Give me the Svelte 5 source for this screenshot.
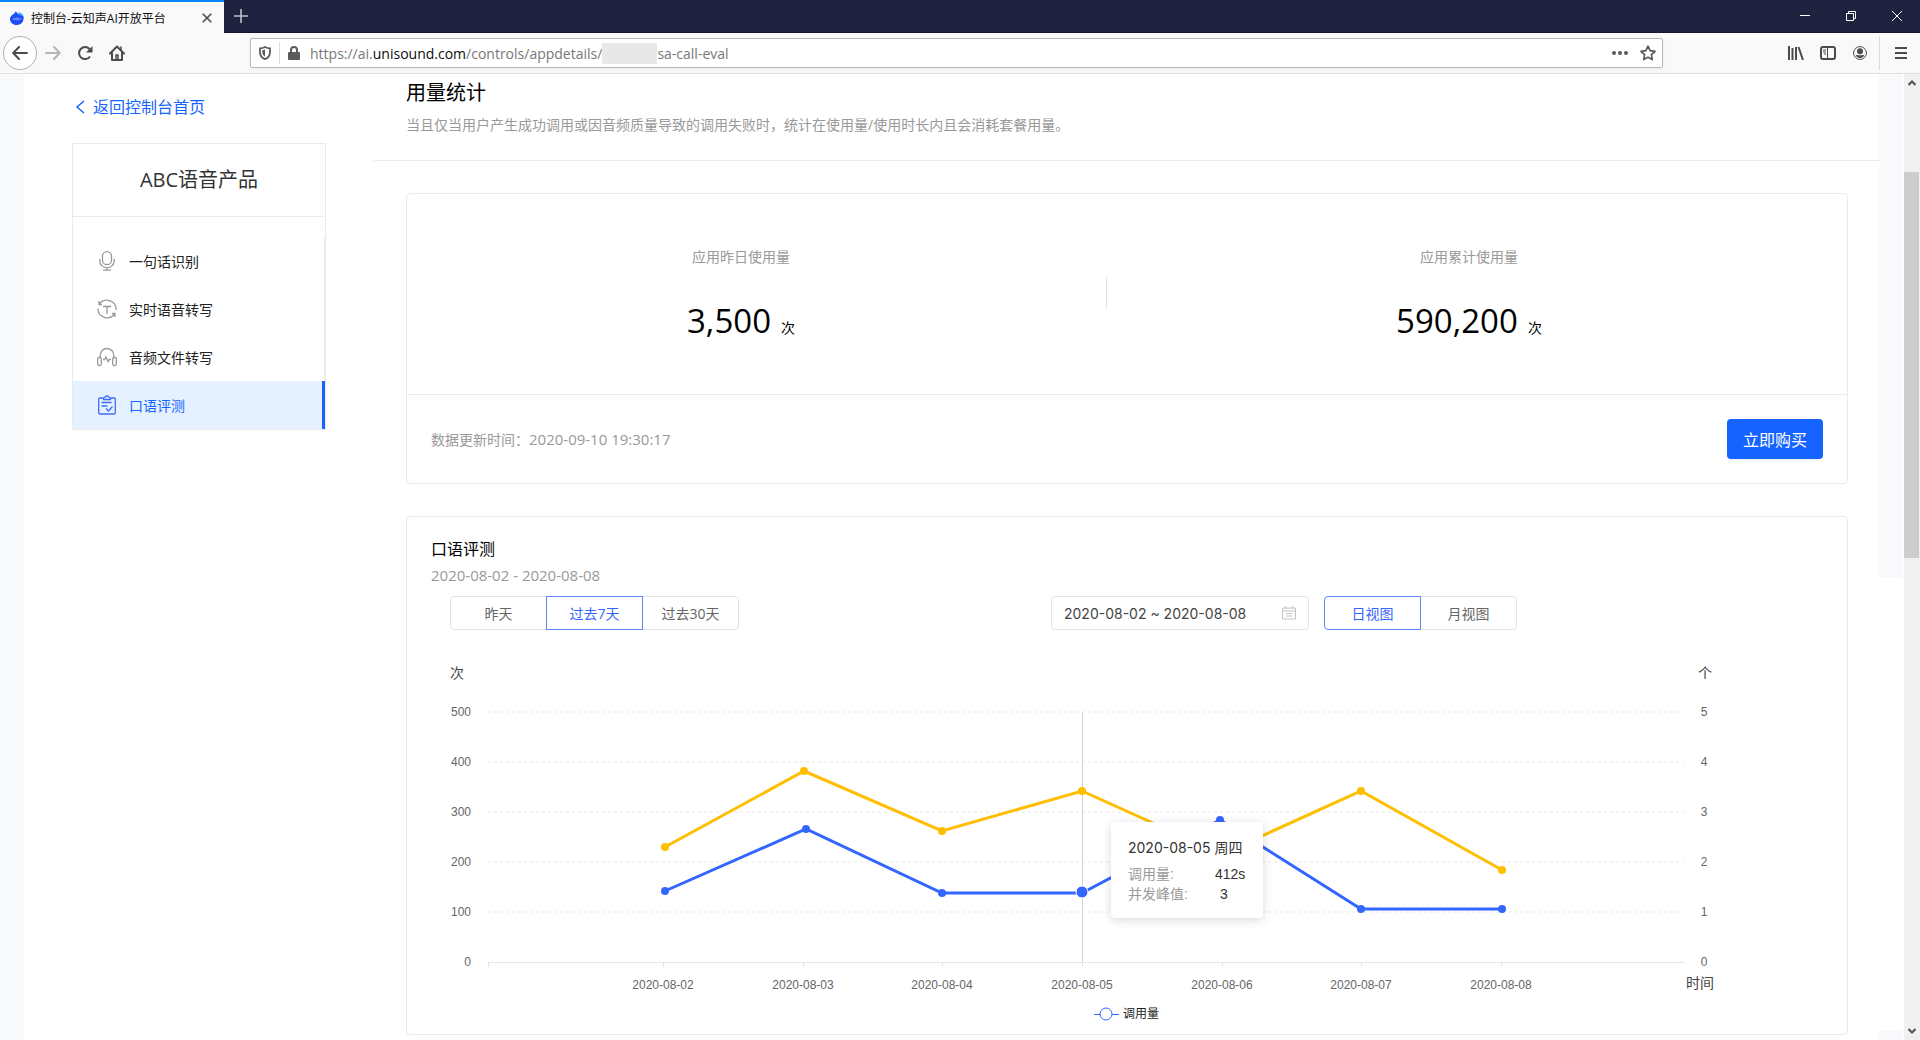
<script lang="ts">
    const menu = [
        { label: '一句话识别', icon: 'mic' },
        { label: '实时语音转写', icon: 'realtime' },
        { label: '音频文件转写', icon: 'audio' },
        { label: '口语评测', icon: 'eval' },
    ];
    let current = $state('口语评测');

    const stats = [
        { label: '应用昨日使用量', value: '3,500' },
        { label: '应用累计使用量', value: '590,200' },
    ];

    const ranges = ['昨天', '过去7天', '过去30天'];
    let range = $state('过去7天');
    const views = ['日视图', '月视图'];
    let view = $state('日视图');
    let period = $state('2020-08-02 ~ 2020-08-08');

    // chart geometry, in viewBox units
    const top = 49;
    const bottom = 299;
    const left = 38;
    const right = 1234;
    const rows = [5, 4, 3, 2, 1, 0];
    const rowY = (n: number) => bottom - n * 50;

    const days = [
        { date: '2020-08-02', x: 213 },
        { date: '2020-08-03', x: 353 },
        { date: '2020-08-04', x: 492 },
        { date: '2020-08-05', x: 632 },
        { date: '2020-08-06', x: 772 },
        { date: '2020-08-07', x: 911 },
        { date: '2020-08-08', x: 1051 },
    ];
    const calls = [[215, 228], [356, 166], [492, 230], [632, 230], [770, 157], [911, 246], [1052, 246]];
    const peaks = [[215, 184], [354, 108], [492, 168], [632, 128], [772, 191], [911, 128], [1052, 207]];
    const line = (pts: number[][]) => pts.map((p) => p.join(',')).join(' ');
</script>

<div class="window">
    <div class="tabbar">
        <div class="tab">
            <svg class="favicon" width="14" height="14" viewBox="0 0 14 14">
                <path d="M6 0C6 2 9 2.500 9 4c1-.8 2-1 3-.4C14 5 14 8 13 10c-1 2.500-3.500 4-6.500 4C3 14 0 11.500 0 8c0-4 4-4 6-8z" fill="#1f4df5" />
                <path d="M8 1.500c3-.5 5.500 2 5.500 5-1-2-3-2-4.500-2.500z" fill="#2fa4ff" />
                <path d="M3 8h1M5 7v2M7 6.500v3M9 7v2M10.500 8h1" stroke="#9fc4ff" stroke-width="1" />
            </svg>
            <span class="tab-title">控制台-云知声AI开放平台</span>
            <button class="icon-btn" aria-label="Close tab">
                <svg width="10" height="10" viewBox="0 0 10 10"><path d="M.7.7l8.600 8.600M9.300.7L.7 9.300" stroke="#4a4a4f" stroke-width="1.600" /></svg>
            </button>
        </div>
        <button class="icon-btn new-tab" aria-label="New tab">
            <svg width="14" height="14" viewBox="0 0 14 14"><path d="M7 0v14M0 7h14" stroke="#bfc0cc" stroke-width="1.600" /></svg>
        </button>
        <div class="win-controls">
            <button class="icon-btn" aria-label="Minimize">
                <svg width="10" height="10" viewBox="0 0 10 10"><path d="M0 4.500h10" stroke="#fff" /></svg>
            </button>
            <button class="icon-btn" aria-label="Restore">
                <svg width="10" height="10" viewBox="0 0 10 10" fill="none" stroke="#fff"><path d="M.5 2.500h7v7h-7zM2.500 2.500v-2h7v7h-2" /></svg>
            </button>
            <button class="icon-btn" aria-label="Close">
                <svg width="10" height="10" viewBox="0 0 10 10"><path d="M0 0l10 10M10 0L0 10" stroke="#fff" /></svg>
            </button>
        </div>
    </div>

    <div class="toolbar">
        <div class="nav-buttons">
            <button class="icon-btn back" aria-label="Back">
                <svg width="16" height="14" viewBox="0 0 16 14" fill="none" stroke="#4a4a4f" stroke-width="2" stroke-linecap="round" stroke-linejoin="round"><path d="M15 7H1.500M7 1L1.200 7 7 13" /></svg>
            </button>
            <button class="icon-btn" aria-label="Forward">
                <svg width="16" height="14" viewBox="0 0 16 14" fill="none" stroke="#b5b5b8" stroke-width="2" stroke-linecap="round" stroke-linejoin="round"><path d="M1 7h13.500M9 1l5.800 6L9 13" /></svg>
            </button>
            <button class="icon-btn" aria-label="Reload">
                <svg width="16" height="16" viewBox="0 0 16 16"><path d="M13 11.500A6 6 0 1 1 12.500 4" fill="none" stroke="#4a4a4f" stroke-width="2" /><path d="M15.500 1v6.500H9z" fill="#4a4a4f" /></svg>
            </button>
            <button class="icon-btn" aria-label="Home">
                <svg width="16" height="16" viewBox="0 0 16 16" fill="none" stroke="#4a4a4f" stroke-width="2" stroke-linejoin="round" stroke-linecap="round"><path d="M1 8.500L8 1.500l7 7M3 8v7h10V8" /><path d="M7 14V10h2v4M12 2v3" stroke-width="1.500" /></svg>
            </button>
        </div>
        <div class="urlbar">
            <svg width="12" height="14" viewBox="0 0 12 14"><path d="M1 2.300C3 2.300 4.600 1.800 6 1c1.400.8 3 1.300 5 1.300V6c0 3.500-2 6-5 7.200C3 12 1 9.500 1 6z" fill="none" stroke="#5b5b5f" stroke-width="1.800" /><path d="M6 3.600v7C4.300 9.600 3.300 8 3.300 6V4.300z" fill="#5b5b5f" /></svg>
            <span class="url-sep"></span>
            <svg width="12" height="14" viewBox="0 0 12 14"><path d="M3 7V4a3 3 0 0 1 6 0v3" fill="none" stroke="#5b5b5f" stroke-width="2" /><rect y="6" width="12" height="8" rx="1" fill="#5b5b5f" /></svg>
            <div class="url" role="textbox" tabindex="0" aria-label="Address" contenteditable="true" spellcheck="false">https://ai.<b>unisound.com</b>/controls/appdetails/<span class="mask"></span>sa-call-eval</div>
            <button class="icon-btn" aria-label="Page actions">
                <svg width="16" height="4" viewBox="0 0 16 4" fill="#5b5b5f"><circle cx="2" cy="2" r="2" /><circle cx="8" cy="2" r="2" /><circle cx="14" cy="2" r="2" /></svg>
            </button>
            <button class="icon-btn" aria-label="Bookmark">
                <svg width="16" height="16" viewBox="0 0 16 16"><path d="M8 1.200l2.100 4.500 4.900.6-3.600 3.400.9 4.900L8 12.200l-4.300 2.400.9-4.900L1 6.300l4.900-.6z" fill="none" stroke="#5b5b5f" stroke-width="1.700" stroke-linejoin="round" /></svg>
            </button>
        </div>
        <div class="tools">
            <button class="icon-btn" aria-label="Library">
                <svg width="16" height="14" viewBox="0 0 16 14" stroke="#4a4a4f" stroke-width="2"><path d="M1 0v14M4.500 2v12M8 1v13M10.500 1l4.500 13" /></svg>
            </button>
            <button class="icon-btn" aria-label="Sidebars">
                <svg width="16" height="14" viewBox="0 0 16 14" fill="none" stroke="#4a4a4f"><rect x="1" y="1" width="14" height="12" rx="2" stroke-width="2" /><path d="M7.500 1v12M3 4h3M3 6h3M4 8h2" stroke-width="1" /></svg>
            </button>
            <button class="icon-btn" aria-label="Account">
                <svg width="14" height="14" viewBox="0 0 14 14"><circle cx="7" cy="7" r="6.400" fill="none" stroke="#4a4a4f" /><circle cx="7" cy="5.200" r="3" fill="#4a4a4f" /><path d="M2.800 9.200c1.500-.6 2.500.1 4.200.1s2.700-.7 4.200-.1C10.500 11 9 12 7 12s-3.500-1-4.200-2.800z" fill="#4a4a4f" /></svg>
            </button>
            <button class="icon-btn menu-btn" aria-label="Menu">
                <svg width="12" height="12" viewBox="0 0 12 12"><path d="M0 1h12M0 6h12M0 11h12" stroke="#4a4a4f" stroke-width="2" /></svg>
            </button>
        </div>
    </div>

    <div class="viewport">
        <div class="gutter"></div>

        <aside>
            <a class="home" href="#home">
                <svg width="10" height="14" viewBox="0 0 10 14"><path d="M9 1L2 7l7 6" fill="none" stroke="#1664ff" stroke-width="1.500" /></svg>
                返回控制台首页
            </a>
            <nav>
                <h2>ABC语音产品</h2>
                <ul>
                    {#each menu as item}
                        <li>
                            <button class="menu-item" class:active={current === item.label} onclick={() => (current = item.label)}>
                                <svg width="20" height="20" viewBox="0 0 20 20" fill="none" stroke="currentColor" stroke-width="1.300">
                                    {#if item.icon === 'mic'}
                                        <rect x="5.500" y=".7" width="9" height="13" rx="4.500" />
                                        <path d="M2.700 8v1.500a7.300 7.300 0 0 0 14.600 0V8M10 16.500v2.500M6 19.200h8" />
                                    {:else if item.icon === 'realtime'}
                                        <path d="M2.500 5a9.200 9.200 0 0 1 16.600 6M17.500 15A9.200 9.200 0 0 1 .9 9.500M2 2v3.500h3M18 18v-3.500h-3M6 7.500h8M10 7.500V15" />
                                    {:else if item.icon === 'audio'}
                                        <rect x=".7" y="10.500" width="3.600" height="8" rx="1.500" />
                                        <rect x="15.700" y="10.500" width="3.600" height="8" rx="1.500" />
                                        <path d="M3.200 10.500V8.500a6.800 7 0 0 1 13.600 0v2M6 12.500h1.500l1.500-2.500 2 4.500 1.200-2H14" />
                                    {:else}
                                        <path d="M6.500 3H3a1.300 1.300 0 0 0-1.300 1.300v13.400A1.300 1.300 0 0 0 3 19h14a1.300 1.300 0 0 0 1.300-1.300V4.300A1.300 1.300 0 0 0 17 3h-3.500M6.500 4.500h7V3c-1.500 0-1.500-2-3.500-2S8 3 6.500 3zM4.500 7.500h10M4.500 11h6M9 13.500l2.500 2.500 4-4.500" />
                                    {/if}
                                </svg>
                                {item.label}
                            </button>
                        </li>
                    {/each}
                </ul>
            </nav>
        </aside>

        <main>
            <header>
                <h1>用量统计</h1>
                <p>当且仅当用户产生成功调用或因音频质量导致的调用失败时，统计在使用量/使用时长内且会消耗套餐用量。</p>
            </header>

            <section class="card">
                <div class="stats">
                    {#each stats as s}
                        <div class="stat">
                            <p class="stat-label">{s.label}</p>
                            <p class="stat-value"><span class="num">{s.value}</span><span>次</span></p>
                        </div>
                    {/each}
                </div>
                <div class="card-foot">
                    <span>数据更新时间：<span class="digits">2020-09-10 19:30:17</span></span>
                    <button class="buy">立即购买</button>
                </div>
            </section>

            <section class="card detail">
                <h3>口语评测</h3>
                <p class="digits period">2020-08-02 - 2020-08-08</p>
                <div class="filters">
                    <div class="segment">
                        {#each ranges as r}
                            <button class:on={range === r} onclick={() => (range = r)}>{r}</button>
                        {/each}
                    </div>
                    <label class="date">
                        <input type="text" bind:value={period} aria-label="日期范围" />
                        <svg width="14" height="14" viewBox="0 0 14 14" fill="none" stroke="#c4c4c4"><path d="M.5 2h13v11H.5zM.5 5h13M3.500 0v3M10.500 0v3M4 7.500h6M4 10h6" /></svg>
                    </label>
                    <div class="segment">
                        {#each views as v}
                            <button class:on={view === v} onclick={() => (view = v)}>{v}</button>
                        {/each}
                    </div>
                </div>

                <svg class="chart" viewBox="0 0 1270 366">
                    <text class="unit-text" x="0" y="15">次</text>
                    <text class="unit-text" x="1248" y="15">个</text>
                    <text class="unit-text" x="1236" y="325">时间</text>

                    {#each rows as n}
                        <text class="axis" x="21" y={rowY(n) + 4} text-anchor="end">{n * 100}</text>
                        <text class="axis" x="1254" y={rowY(n) + 4} text-anchor="middle">{n}</text>
                        {#if n > 0}
                            <line x1={left} x2={right} y1={rowY(n)} y2={rowY(n)} stroke="#f3f3f3" stroke-width="2" stroke-dasharray="3 3" />
                        {/if}
                    {/each}

                    <path d="M{left} {bottom + .5}H{right + 1}M{left + .5} {bottom}v5" stroke="#e6e6e6" />
                    {#each days as d}
                        <path d="M{d.x + .5} {bottom}v5" stroke="#e6e6e6" />
                        <text class="axis" x={d.x} y="326" text-anchor="middle">{d.date}</text>
                    {/each}

                    <path d="M632.500 {top}V{bottom}" stroke="#d4d4d4" />
                    <polyline points={line(peaks)} fill="none" stroke="#ffbf00" stroke-width="3" />
                    {#each peaks as p}
                        <circle cx={p[0]} cy={p[1]} r="4" fill="#ffbf00" />
                    {/each}
                    <polyline points={line(calls)} fill="none" stroke="#3366ff" stroke-width="3" />
                    {#each calls as p, i}
                        {#if i === 3}
                            <circle cx={p[0]} cy={p[1] - 1} r="6" fill="#3366ff" stroke="#fff" stroke-width="1" />
                        {:else}
                            <circle cx={p[0]} cy={p[1]} r="4" fill="#3366ff" />
                        {/if}
                    {/each}

                    <rect class="tip" x="661" y="159" width="152" height="96" rx="4" />
                    <text class="tip-text tip-date" x="678" y="190">2020-08-05 周四</text>
                    <text class="tip-text muted" x="678" y="216">调用量:</text>
                    <text class="tip-text" x="765" y="216">412s</text>
                    <text class="tip-text muted" x="678" y="236">并发峰值:</text>
                    <text class="tip-text" x="770" y="236">3</text>

                    <path d="M644 351.500h25" stroke="#3366ff" />
                    <circle cx="656" cy="351" r="6" fill="#fff" stroke="#3366ff" />
                    <text class="legend" x="673" y="355">调用量</text>
                </svg>
            </section>
        </main>

        <div class="gutter right">
            <div class="shade"></div>
            <div class="shade-rest"></div>
        </div>

        <div class="scrollbar">
            <svg width="8" height="6" viewBox="0 0 8 6"><path d="M.5 5L4 1.500 7.500 5" fill="none" stroke="#505050" stroke-width="2" /></svg>
            <div class="track"><div class="thumb"></div></div>
            <svg width="8" height="6" viewBox="0 0 8 6"><path d="M.5 1L4 4.500 7.500 1" fill="none" stroke="#505050" stroke-width="2" /></svg>
        </div>
    </div>
</div>

<style>
    :global(body) {
        background: #fff;
    }
    .window {
        display: flex;
        flex-direction: column;
        height: 100vh;
        overflow: hidden;
        font-family: 'Open Sans', 'Noto Sans CJK SC', sans-serif;
        font-size: 14px;
        color: #222;
    }
    .window * {
        box-sizing: border-box;
    }
    h1, h2, h3, p, ul {
        margin: 0;
        padding: 0;
        font-weight: 400;
    }
    button {
        font: inherit;
        color: inherit;
        cursor: pointer;
    }
    svg {
        flex: none;
    }
    .icon-btn {
        display: flex;
        align-items: center;
        justify-content: center;
        padding: 0;
        border: 0;
        background: none;
    }

    /* browser chrome */
    .tabbar {
        display: flex;
        flex: none;
        height: 33px;
        background: #20233f;
        border-bottom: 1px solid #14162b;
    }
    .tab {
        display: flex;
        align-items: center;
        width: 224px;
        height: 33px;
        padding: 0 12px 0 10px;
        background: #f9f9fa;
        border-top: 2px solid #0a84ff;
    }
    .tab-title {
        flex: 1;
        margin-left: 7px;
        font-size: 12px;
        color: #0c0c0d;
    }
    .new-tab {
        width: 34px;
    }
    .win-controls {
        display: flex;
        margin-left: auto;
    }
    .win-controls button {
        width: 46px;
    }
    .toolbar {
        display: flex;
        align-items: center;
        flex: none;
        height: 41px;
        background: #f9f9fa;
        border-bottom: 1px solid #e0e0e1;
    }
    .nav-buttons {
        display: flex;
        align-items: center;
        width: 250px;
        padding-left: 3px;
    }
    .nav-buttons button {
        width: 32px;
        height: 34px;
    }
    .nav-buttons .back {
        width: 34px;
        border: 1px solid #b1b1b3;
        border-radius: 50%;
        background: #fff;
    }
    .urlbar {
        display: flex;
        align-items: center;
        flex: 1;
        height: 30px;
        padding: 0 6px 0 8px;
        background: #fff;
        border: 1px solid #b8b8b9;
        border-radius: 2px;
        box-shadow: 0 1px 3px rgba(0, 0, 0, 0.06);
    }
    .url-sep {
        width: 1px;
        height: 22px;
        margin: 0 8px;
        background: #dcdcdd;
    }
    .url {
        display: flex;
        align-items: center;
        flex: 1;
        margin-left: 10px;
        color: #77777a;
        outline: none;
        white-space: nowrap;
    }
    .url b {
        font-weight: 400;
        color: #0c0c0d;
    }
    .mask {
        width: 55px;
        height: 21px;
        background: #e8e8e8;
    }
    .urlbar button {
        margin-left: 12px;
    }
    .tools {
        display: flex;
        align-items: center;
        padding-left: 117px;
    }
    .tools button {
        width: 32px;
        height: 34px;
    }
    .tools .menu-btn {
        width: 41px;
        margin-left: 3px;
        padding-left: 2px;
        border-left: 1px solid #dcdcdd;
    }

    /* page */
    .viewport {
        display: flex;
        flex: 1;
        min-height: 0;
        overflow: hidden;
    }
    .gutter {
        flex: none;
        width: 24px;
        background: #f7f9fb;
    }
    .gutter.right {
        display: flex;
        flex-direction: column;
        gap: 454px;
        width: 25px;
        padding-right: 1px;
        background: #fff;
    }
    .shade {
        flex: none;
        height: 503px;
        background: #f7f9fb;
    }
    .shade-rest {
        flex: 1;
        background: #f7f9fb;
    }
    .scrollbar {
        display: flex;
        flex-direction: column;
        align-items: center;
        flex: none;
        width: 16px;
        padding: 6px 0;
        background: #f0f0f0;
    }
    .track {
        flex: 1;
        width: 100%;
        padding: 86px 1px 0 0;
    }
    .thumb {
        height: 386px;
        background: #cdcdcd;
    }
    aside {
        flex: none;
        width: 254px;
        margin: 21px 48px 0;
    }
    .home {
        display: flex;
        align-items: center;
        gap: 8px;
        padding-left: 3px;
        font-size: 16px;
        line-height: 24px;
        color: #1664ff;
        text-decoration: none;
    }
    nav {
        margin-top: 24px;
        border: 1px solid #ebebeb;
    }
    nav h2 {
        font-size: 20px;
        line-height: 72px;
        text-align: center;
        color: #333;
        border-bottom: 1px solid #ebebeb;
    }
    nav ul {
        padding-top: 20px;
        list-style: none;
    }
    .menu-item {
        display: flex;
        align-items: center;
        gap: 12px;
        width: 100%;
        height: 48px;
        padding: 0 0 0 24px;
        border: 0;
        border-right: 1px solid #ebebeb;
        background: none;
    }
    .menu-item svg {
        color: #999;
    }
    .menu-item.active {
        color: #1664ff;
        background: #e6f1ff;
        border-right: 3px solid #1664ff;
    }
    .menu-item.active svg {
        color: #3f6bff;
    }
    main {
        flex: 1;
        min-width: 0;
    }
    header {
        padding: 5px 32px 25px;
        border-bottom: 1px solid #ebebeb;
    }
    header h1 {
        font-size: 20px;
        line-height: 28px;
        color: #000;
    }
    header p {
        margin-top: 8px;
        line-height: 20px;
        color: #999;
    }
    .card {
        margin: 32px 31px 0 32px;
        border: 1px solid #ebebeb;
        border-radius: 4px;
    }
    .stats {
        display: grid;
        grid-template-columns: 35fr 37fr;
        height: 200px;
    }
    .stat {
        display: flex;
        flex-direction: column;
        align-items: center;
        padding: 53px 16px 0 0;
    }
    .stat:first-child {
        padding-right: 32px;
        background: linear-gradient(#e3e3e3, #e3e3e3) no-repeat right 83px / 1px 32px;
    }
    .stat-label {
        line-height: 20px;
        color: #999;
    }
    .stat-value {
        display: flex;
        align-items: baseline;
        gap: 10px;
        margin-top: 30px;
        line-height: 48px;
        color: #000;
    }
    .num {
        font-size: 33px;
    }
    .card-foot {
        display: flex;
        align-items: center;
        justify-content: space-between;
        height: 89px;
        padding: 0 24px;
        color: #999;
        border-top: 1px solid #ebebeb;
    }
    .digits {
        font-size: 15px;
    }
    .buy {
        width: 96px;
        height: 40px;
        padding: 0;
        font-size: 16px;
        color: #fff;
        background: #1664ff;
        border: 0;
        border-radius: 4px;
        box-shadow: 0 2px 2px rgba(0, 0, 0, 0.05);
    }
    .detail {
        padding: 20px 24px 5px;
    }
    .detail h3 {
        font-size: 16px;
        line-height: 24px;
        color: #000;
    }
    .period {
        margin-top: 4px;
        line-height: 20px;
        color: #999;
    }
    .filters {
        display: flex;
        align-items: center;
        max-width: 1086px;
        margin-top: 11px;
        padding-left: 19px;
    }
    .segment {
        display: flex;
    }
    .segment button {
        width: 97px;
        height: 34px;
        padding: 0;
        color: #666;
        background: #fff;
        border: 1px solid #e3e3e3;
    }
    .segment button + button {
        margin-left: -1px;
    }
    .segment button:first-child {
        border-radius: 4px 0 0 4px;
    }
    .segment button:last-child {
        border-radius: 0 4px 4px 0;
    }
    .segment .on {
        z-index: 1;
        color: #3366ff;
        border-color: #5c85ff;
    }
    .date {
        display: flex;
        align-items: center;
        width: 258px;
        height: 34px;
        margin: 0 15px 0 auto;
        padding: 0 12px;
        border: 1px solid #e3e3e3;
        border-radius: 4px;
    }
    .date input {
        flex: 1;
        min-width: 0;
        padding: 0;
        font-family: Inter, sans-serif;
        font-size: 14px;
        color: #444;
        border: 0;
        outline: none;
        background: none;
    }
    .chart {
        display: block;
        width: 100%;
        max-width: 1270px;
        margin: 33px 0 0 19px;
        font-family: 'Liberation Sans', 'Noto Sans CJK SC', sans-serif;
    }
    .axis {
        font-size: 12px;
        fill: #666;
    }
    .unit-text {
        font-size: 14px;
        fill: #444;
    }
    .tip {
        fill: #fff;
        filter: drop-shadow(0 2px 5px rgba(0, 0, 0, 0.15));
    }
    .tip-text {
        font-size: 14px;
        fill: #333;
    }
    .tip-date {
        font-family: Inter, 'Noto Sans CJK SC', sans-serif;
    }
    .tip-text.muted {
        fill: #999;
    }
    .legend {
        font-size: 12px;
        fill: #222;
    }
</style>
